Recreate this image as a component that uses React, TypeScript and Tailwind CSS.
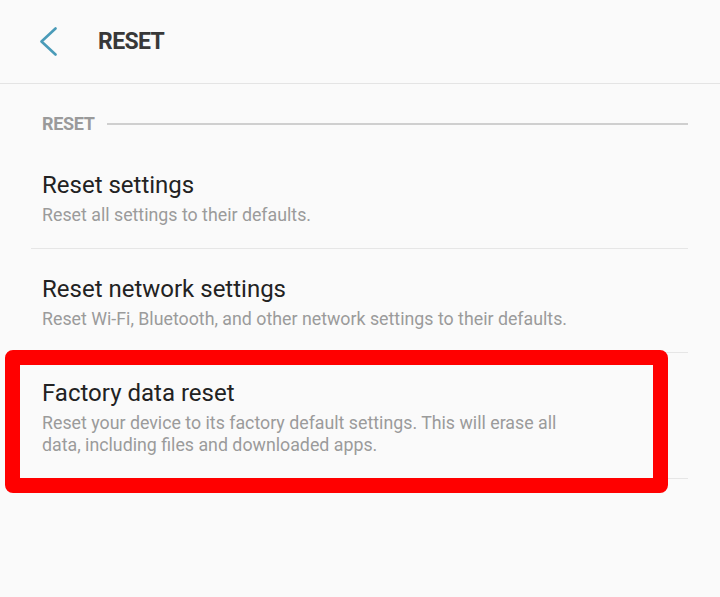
const items = [
  { title: 'Reset settings', desc: 'Reset all settings to their defaults.' },
  { title: 'Reset network settings', desc: 'Reset Wi-Fi, Bluetooth, and other network settings to their defaults.' },
  {
    title: 'Factory data reset',
    desc: 'Reset your device to its factory default settings. This will erase all data, including files and downloaded apps.',
  },
];

export default function App() {
  return (
    <div
      className="relative min-h-[597px] w-[720px] bg-[#fafafa] overflow-hidden"
      style={{ fontFamily: "Roboto, 'Noto Sans', sans-serif" }}
    >
      {/* Header */}
      <div className="flex h-[84px] items-center border-b border-[#e4e4e4]">
        <svg className="ml-[39px]" width="19" height="29" viewBox="0 0 19 29" fill="none">
          <polyline
            points="16.5,1.5 2.5,14.5 16.5,27.5"
            stroke="#4a9bb8"
            strokeWidth="2.6"
            strokeLinecap="round"
            strokeLinejoin="round"
          />
        </svg>
        <h1 className="ml-[40px] mt-[1px] text-[23px] font-bold tracking-[-0.6px] text-[#383838]">RESET</h1>
      </div>

      {/* Section header */}
      <div className="mt-[30px] flex h-[20px] items-center pl-[42px] pr-[32px]">
        <span className="text-[18px] leading-[20px] font-bold tracking-[-0.3px] text-[#9a9a9a]">RESET</span>
        <div className="ml-3 h-[2px] flex-1 bg-[#cfcfcf]" />
      </div>

      {/* Items */}
      <div className="ml-[31px] mr-[32px] mt-[11px]">
        {items.map((it) => (
          <div key={it.title} className="border-b border-[#e6e6e6] pl-[11px] pr-[90px] pt-[26px] pb-[22px]">
            <div className="text-[24px] leading-[28px] text-[#222222]">{it.title}</div>
            <div className="mt-[5px] text-[17.8px] leading-[22px] text-[#9b9b9b]">{it.desc}</div>
          </div>
        ))}
      </div>

      {/* Highlight annotation */}
      <div className="absolute left-[5px] top-[350px] h-[143px] w-[663px] rounded-[8px] border-[15px] border-[#ff0000]" />
    </div>
  );
}
